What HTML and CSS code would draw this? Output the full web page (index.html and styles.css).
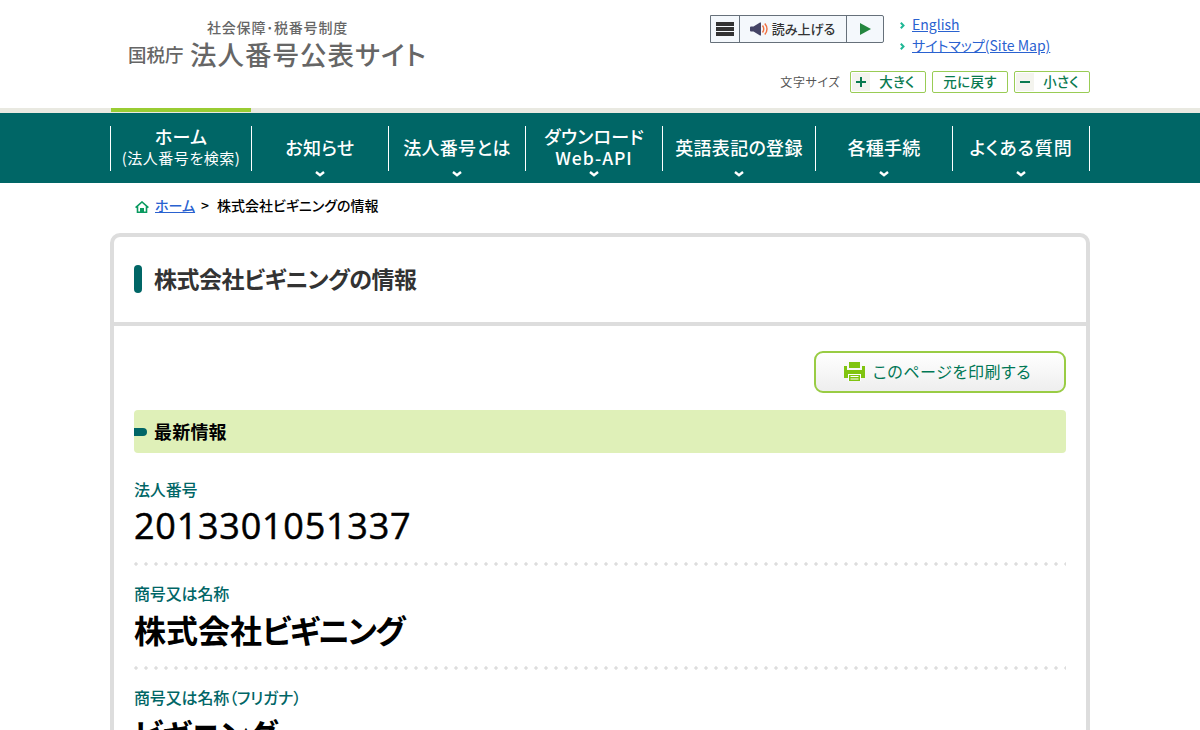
FILE: index.html
```
<!DOCTYPE html>
<html lang="ja">
<head>
    <meta charset="UTF-8">
    <meta name="viewport" content="width=device-width, initial-scale=1.0">
    <title>株式会社ビギニングの情報|国税庁法人番号公表サイト</title>
    <link rel="stylesheet" href="styles.css">
</head>
<body>
    <!-- ヘッダー -->
    <header class="header">
        <div class="inner header-inner">
            <a class="logo" href="#">
                <span class="logo-sub">社会保障･税番号制度</span>
                <span class="logo-main"><span class="logo-org">国税庁</span><span class="logo-name">法人番号公表サイト</span></span>
            </a>
            <div class="header-tools">
                <div class="tools-top">
                    <div class="reader">
                        <button class="reader-menu" aria-label="メニュー">
                            <svg width="18" height="14" viewBox="0 0 18 14"><path d="M0 0h18v4H0zM0 5h18v4H0zM0 10h18v4H0z" fill="#333"/></svg>
                        </button>
                        <button class="reader-speak">
                            <svg width="19" height="14" viewBox="0 0 19 14">
                                <path d="M0 5.5Q0 4.500 1 4.500H3.500L10 .5H11V13.500H10L3.500 9.500H1Q0 9.500 0 8.500z" fill="#444466"/>
                                <path d="M12.500 3.500q2.500 3.500 0 7M14.800 1.500q4.400 5.500 0 11" fill="none" stroke="#f07040" stroke-width="1.400"/>
                            </svg>
                            <span>読み上げる</span>
                        </button>
                        <button class="reader-play" aria-label="再生">
                            <svg width="11" height="12" viewBox="0 0 11 12"><path d="M0 0l11 6-11 6z" fill="#24863f"/></svg>
                        </button>
                    </div>
                    <ul class="header-links">
                        <li><svg width="5" height="7" viewBox="0 0 5 7"><path d="M.8.7L3.500 3.500.8 6.300" fill="none" stroke="#1fb795" stroke-width="2"/></svg><a href="#">English</a></li>
                        <li><svg width="5" height="7" viewBox="0 0 5 7"><path d="M.8.7L3.500 3.500.8 6.300" fill="none" stroke="#1fb795" stroke-width="2"/></svg><a href="#">サイトマップ(Site Map)</a></li>
                    </ul>
                </div>
                <div class="font-size">
                    <span class="font-size-label">文字サイズ</span>
                    <button class="size-btn"><i class="size-icon plus"></i><span>大きく</span></button>
                    <button class="size-btn"><span>元に戻す</span></button>
                    <button class="size-btn"><i class="size-icon"></i><span>小さく</span></button>
                </div>
            </div>
        </div>
    </header>

    <!-- グローバルナビ -->
    <nav class="gnav">
        <ul class="inner gnav-list">
            <li class="current"><a class="two-line" href="#">ホーム<small>(法人番号を検索)</small></a></li>
            <li><a href="#">お知らせ</a><svg class="arrow" width="10" height="6" viewBox="0 0 10 6"><path d="M1 1L5 4.300 9 1" /></svg></li>
            <li><a href="#">法人番号とは</a><svg class="arrow" width="10" height="6" viewBox="0 0 10 6"><path d="M1 1L5 4.300 9 1" /></svg></li>
            <li><a class="two-line" href="#">ダウンロード<span>Web-API</span></a><svg class="arrow" width="10" height="6" viewBox="0 0 10 6"><path d="M1 1L5 4.300 9 1" /></svg></li>
            <li><a href="#">英語表記の登録</a><svg class="arrow" width="10" height="6" viewBox="0 0 10 6"><path d="M1 1L5 4.300 9 1" /></svg></li>
            <li><a href="#">各種手続</a><svg class="arrow" width="10" height="6" viewBox="0 0 10 6"><path d="M1 1L5 4.300 9 1" /></svg></li>
            <li class="faq"><a href="#">よくある質問</a><svg class="arrow" width="10" height="6" viewBox="0 0 10 6"><path d="M1 1L5 4.300 9 1" /></svg></li>
        </ul>
    </nav>

    <!-- パンくずリスト -->
    <div class="inner breadcrumb">
        <svg width="14" height="12" viewBox="0 0 14 12"><path d="M.6 6.600L7 1l6.400 5.600M2.500 5.500v5.700h9V5.500" fill="none" stroke="#0a9a60" stroke-width="1.600"/><path d="M5 7h4v4H5z" fill="#0a9a60"/></svg>
        <a href="#">ホーム</a>
        <span class="gt">&gt;</span>
        <span class="here">株式会社ビギニングの情報</span>
    </div>

    <!-- 本文 -->
    <main class="inner panel">
        <div class="panel-title">
            <h1><span>株式会社ビギニングの情報</span></h1>
        </div>
        <div class="panel-body">
            <div class="print">
                <button class="print-btn">
                    <svg width="21" height="19" viewBox="0 0 21 19">
                        <path d="M5 0h11v6H5zM0 4h3v4h15V4h3v12H0z" fill="#80c410"/>
                        <path d="M4 12h13v7H4z" fill="#fff"/>
                        <path d="M5 13h11v6H5z" fill="#80c410"/>
                        <path d="M6.500 14.500h8M6.500 17h8" stroke="#fff" stroke-width="1"/>
                    </svg>
                    <span>このページを印刷する</span>
                </button>
            </div>
            <h2><span>最新情報</span></h2>
            <dl class="info">
                <div class="info-item">
                    <dt>法人番号</dt>
                    <dd class="number">2013301051337</dd>
                </div>
                <div class="info-item">
                    <dt>商号又は名称</dt>
                    <dd>株式会社<span class="kana">ビギニング</span></dd>
                </div>
                <div class="info-item">
                    <dt>商号又は名称（フリガナ）</dt>
                    <dd class="kana">ビギニング</dd>
                </div>
            </dl>
        </div>
    </main>
</body>
</html>
```
FILE: styles.css
```
* {
    box-sizing: border-box;
}

html {
    overflow: hidden;
}

body {
    margin: 0;
    height: 730px;
    overflow: hidden;
    background: #fff;
    color: #000;
    font-family: "Noto Sans CJK JP", sans-serif;
    font-size: 14px;
    font-feature-settings: "palt";
}

ul, dl, dd, h1, h2 {
    margin: 0;
    padding: 0;
    list-style: none;
}

button {
    margin: 0;
    padding: 0;
    font: inherit;
    font-feature-settings: inherit;
    background: none;
    border: 0;
}

a {
    color: #2a62d0;
}

svg {
    display: block;
    flex: none;
}

.inner {
    width: 980px;
    margin: 0 auto;
}

/* ヘッダー */
.header {
    height: 113px;
    border-bottom: 5px solid #e9e9e1;
}

.header-inner {
    display: flex;
    justify-content: space-between;
}

.logo {
    display: flex;
    flex-direction: column;
    width: 300px;
    margin: 17px 0 0 18px;
    color: #666;
    text-decoration: none;
    font-weight: 500;
    white-space: nowrap;
}

.logo-sub {
    padding-left: 79px;
    font-size: 14px;
    line-height: 21px;
    letter-spacing: 0.8px;
}

.logo-main {
    display: flex;
    align-items: center;
    line-height: 32px;
}

.logo-org {
    width: 62px;
    font-size: 18.5px;
}

.logo-name {
    font-size: 26.5px;
    letter-spacing: 1px;
}

.header-tools {
    width: 380px;
}

.tools-top {
    display: flex;
    height: 71px;
    padding-top: 15px;
}

.reader {
    display: flex;
    width: 174px;
    height: 28px;
    border: 1px solid #66707a;
    border-radius: 0 2px 2px 0;
    background: #f4f8fc;
}

.reader button {
    display: flex;
    align-items: center;
    justify-content: center;
}

.reader-menu {
    width: 28px;
}

.reader .reader-speak {
    width: 108px;
    padding-right: 1px;
    gap: 3px;
    border: solid #66707a;
    border-width: 0 1px;
    color: #333;
    font-size: 13px;
    font-weight: 500;
}

.reader-speak span {
    padding-bottom: 2px;
}

.reader-play {
    width: 36px;
}

.header-links {
    margin-left: 16px;
}

.header-links li {
    display: flex;
    align-items: center;
    gap: 7px;
    height: 21px;
    white-space: nowrap;
}

.header-links a {
    padding-bottom: 2px;
    font-size: 14px;
    line-height: 21px;
}

.font-size {
    display: flex;
    align-items: center;
    justify-content: flex-end;
    gap: 6px;
}

.font-size-label {
    margin-right: 4px;
    padding-bottom: 2px;
    color: #555;
    font-size: 12px;
    letter-spacing: 0.6px;
}

.size-btn {
    display: flex;
    align-items: center;
    width: 76px;
    height: 22px;
    padding: 1px;
    border: 1px solid #99cc55;
    border-radius: 2px;
    color: #0a7a50;
    font-size: 13.5px;
    font-weight: 500;
    line-height: 18px;
    letter-spacing: 0.3px;
}

.size-btn span {
    flex: 1;
    padding-bottom: 2px;
    text-align: center;
}

.size-icon {
    display: block;
    width: 18px;
    height: 18px;
    background: linear-gradient(#0a7a50, #0a7a50) center / 10px 2px no-repeat, #f4f4ee;
}

.size-icon.plus {
    background: linear-gradient(#0a7a50, #0a7a50) center / 10px 2px no-repeat, linear-gradient(#0a7a50, #0a7a50) center / 2px 10px no-repeat, #f4f4ee;
}

/* グローバルナビ */
.gnav {
    height: 70px;
    background: #006666;
}

.gnav-list {
    display: grid;
    grid-template-columns: 141px 137px 137px 137px 153px 137px 138px;
    height: 70px;
}

.gnav li {
    position: relative;
    display: flex;
    align-items: center;
    justify-content: center;
    height: 45px;
    margin-top: 13px;
    border-left: 1px solid #fff;
}

.gnav li:last-child {
    border-right: 1px solid #fff;
}

.gnav a {
    padding-bottom: 2px;
    color: #fff;
    text-align: center;
    text-decoration: none;
    font-size: 18px;
    font-weight: 500;
    line-height: 21px;
    letter-spacing: 0.3px;
    white-space: nowrap;
}

.gnav .two-line {
    padding-bottom: 4px;
}

.gnav .faq a {
    letter-spacing: 0.9px;
}

.gnav small,
.gnav a span {
    display: block;
}

.gnav small {
    font-size: 15px;
    font-weight: 400;
    letter-spacing: 0.5px;
}

.gnav a span {
    font-size: 17.5px;
    letter-spacing: 1px;
}

/* 選択中のタブの緑ライン */
.gnav .current::before {
    content: "";
    position: absolute;
    top: -18px;
    left: 0;
    width: 140px;
    height: 4px;
    background: #99cc33;
}

.gnav .arrow {
    position: absolute;
    bottom: -6px;
    left: calc(50% - 5px);
    fill: none;
    stroke: #fff;
    stroke-width: 2.4;
}

/* パンくずリスト */
.breadcrumb {
    display: flex;
    align-items: center;
    height: 50px;
    padding: 0 25px 4px;
    font-size: 14px;
    font-weight: 500;
}

.breadcrumb a,
.breadcrumb span {
    padding-bottom: 2px;
}

.breadcrumb svg {
    margin-top: 2px;
}

.breadcrumb a {
    margin-left: 6px;
}

.breadcrumb .gt {
    margin: 0 8px 0 6px;
}

/* 本文 */
.panel {
    height: 600px;
    border: 4px solid #ddd;
    border-radius: 10px;
}

.panel-title {
    height: 89px;
    padding: 28px 20px 0;
    border-bottom: 4px solid #ddd;
}

h1 {
    display: flex;
    align-items: center;
    height: 28px;
    color: #333;
    font-size: 23px;
    font-weight: 700;
    line-height: 24px;
    letter-spacing: -0.5px;
    white-space: nowrap;
}

h1 span {
    padding-bottom: 3px;
}

h1::before {
    content: "";
    width: 8px;
    height: 28px;
    margin-right: 12px;
    border-radius: 4px;
    background: #006666;
}

.panel-body {
    padding: 25px 20px 0;
}

.print {
    display: flex;
    justify-content: flex-end;
}

.print-btn {
    display: flex;
    align-items: center;
    justify-content: center;
    gap: 8px;
    width: 252px;
    height: 42px;
    padding-right: 5px;
    border: 2px solid #99cc44;
    border-radius: 9px;
    background: linear-gradient(#fff, #eee);
    color: #007755;
    font-size: 16px;
    letter-spacing: 0.6px;
}

.print-btn svg {
    margin-bottom: 1px;
}

.print-btn span {
    padding-bottom: 2px;
}

h2 {
    display: flex;
    align-items: center;
    height: 43px;
    margin-top: 17px;
    border-radius: 4px;
    background: #dff0b8;
    font-size: 18px;
    font-weight: 700;
    letter-spacing: 0.2px;
}

h2 span {
    padding-bottom: 2px;
}

h2::before {
    content: "";
    width: 13px;
    height: 8px;
    margin-right: 7px;
    border-radius: 0 4px 4px 0;
    background: #006666;
}

.info {
    padding-top: 9px;
}

.info-item {
    height: 104px;
    padding-top: 15px;
    background: radial-gradient(circle, #ddd 1.4px, transparent 1.9px) -3px 100% / 10px 4px repeat-x;
}

.info dt {
    color: #006666;
    font-size: 16px;
    font-weight: 500;
    line-height: 24px;
    letter-spacing: -0.15px;
}

.info dd {
    font-size: 32px;
    font-weight: 700;
    line-height: 48px;
    white-space: nowrap;
}

.info .kana {
    letter-spacing: -1.6px;
}

.info .number {
    font-family: "Open Sans", "Noto Sans CJK JP", sans-serif;
    font-size: 36px;
    font-weight: 500;
    line-height: 50px;
    letter-spacing: 0.75px;
    -webkit-text-stroke: 0.5px #000;
}
```
